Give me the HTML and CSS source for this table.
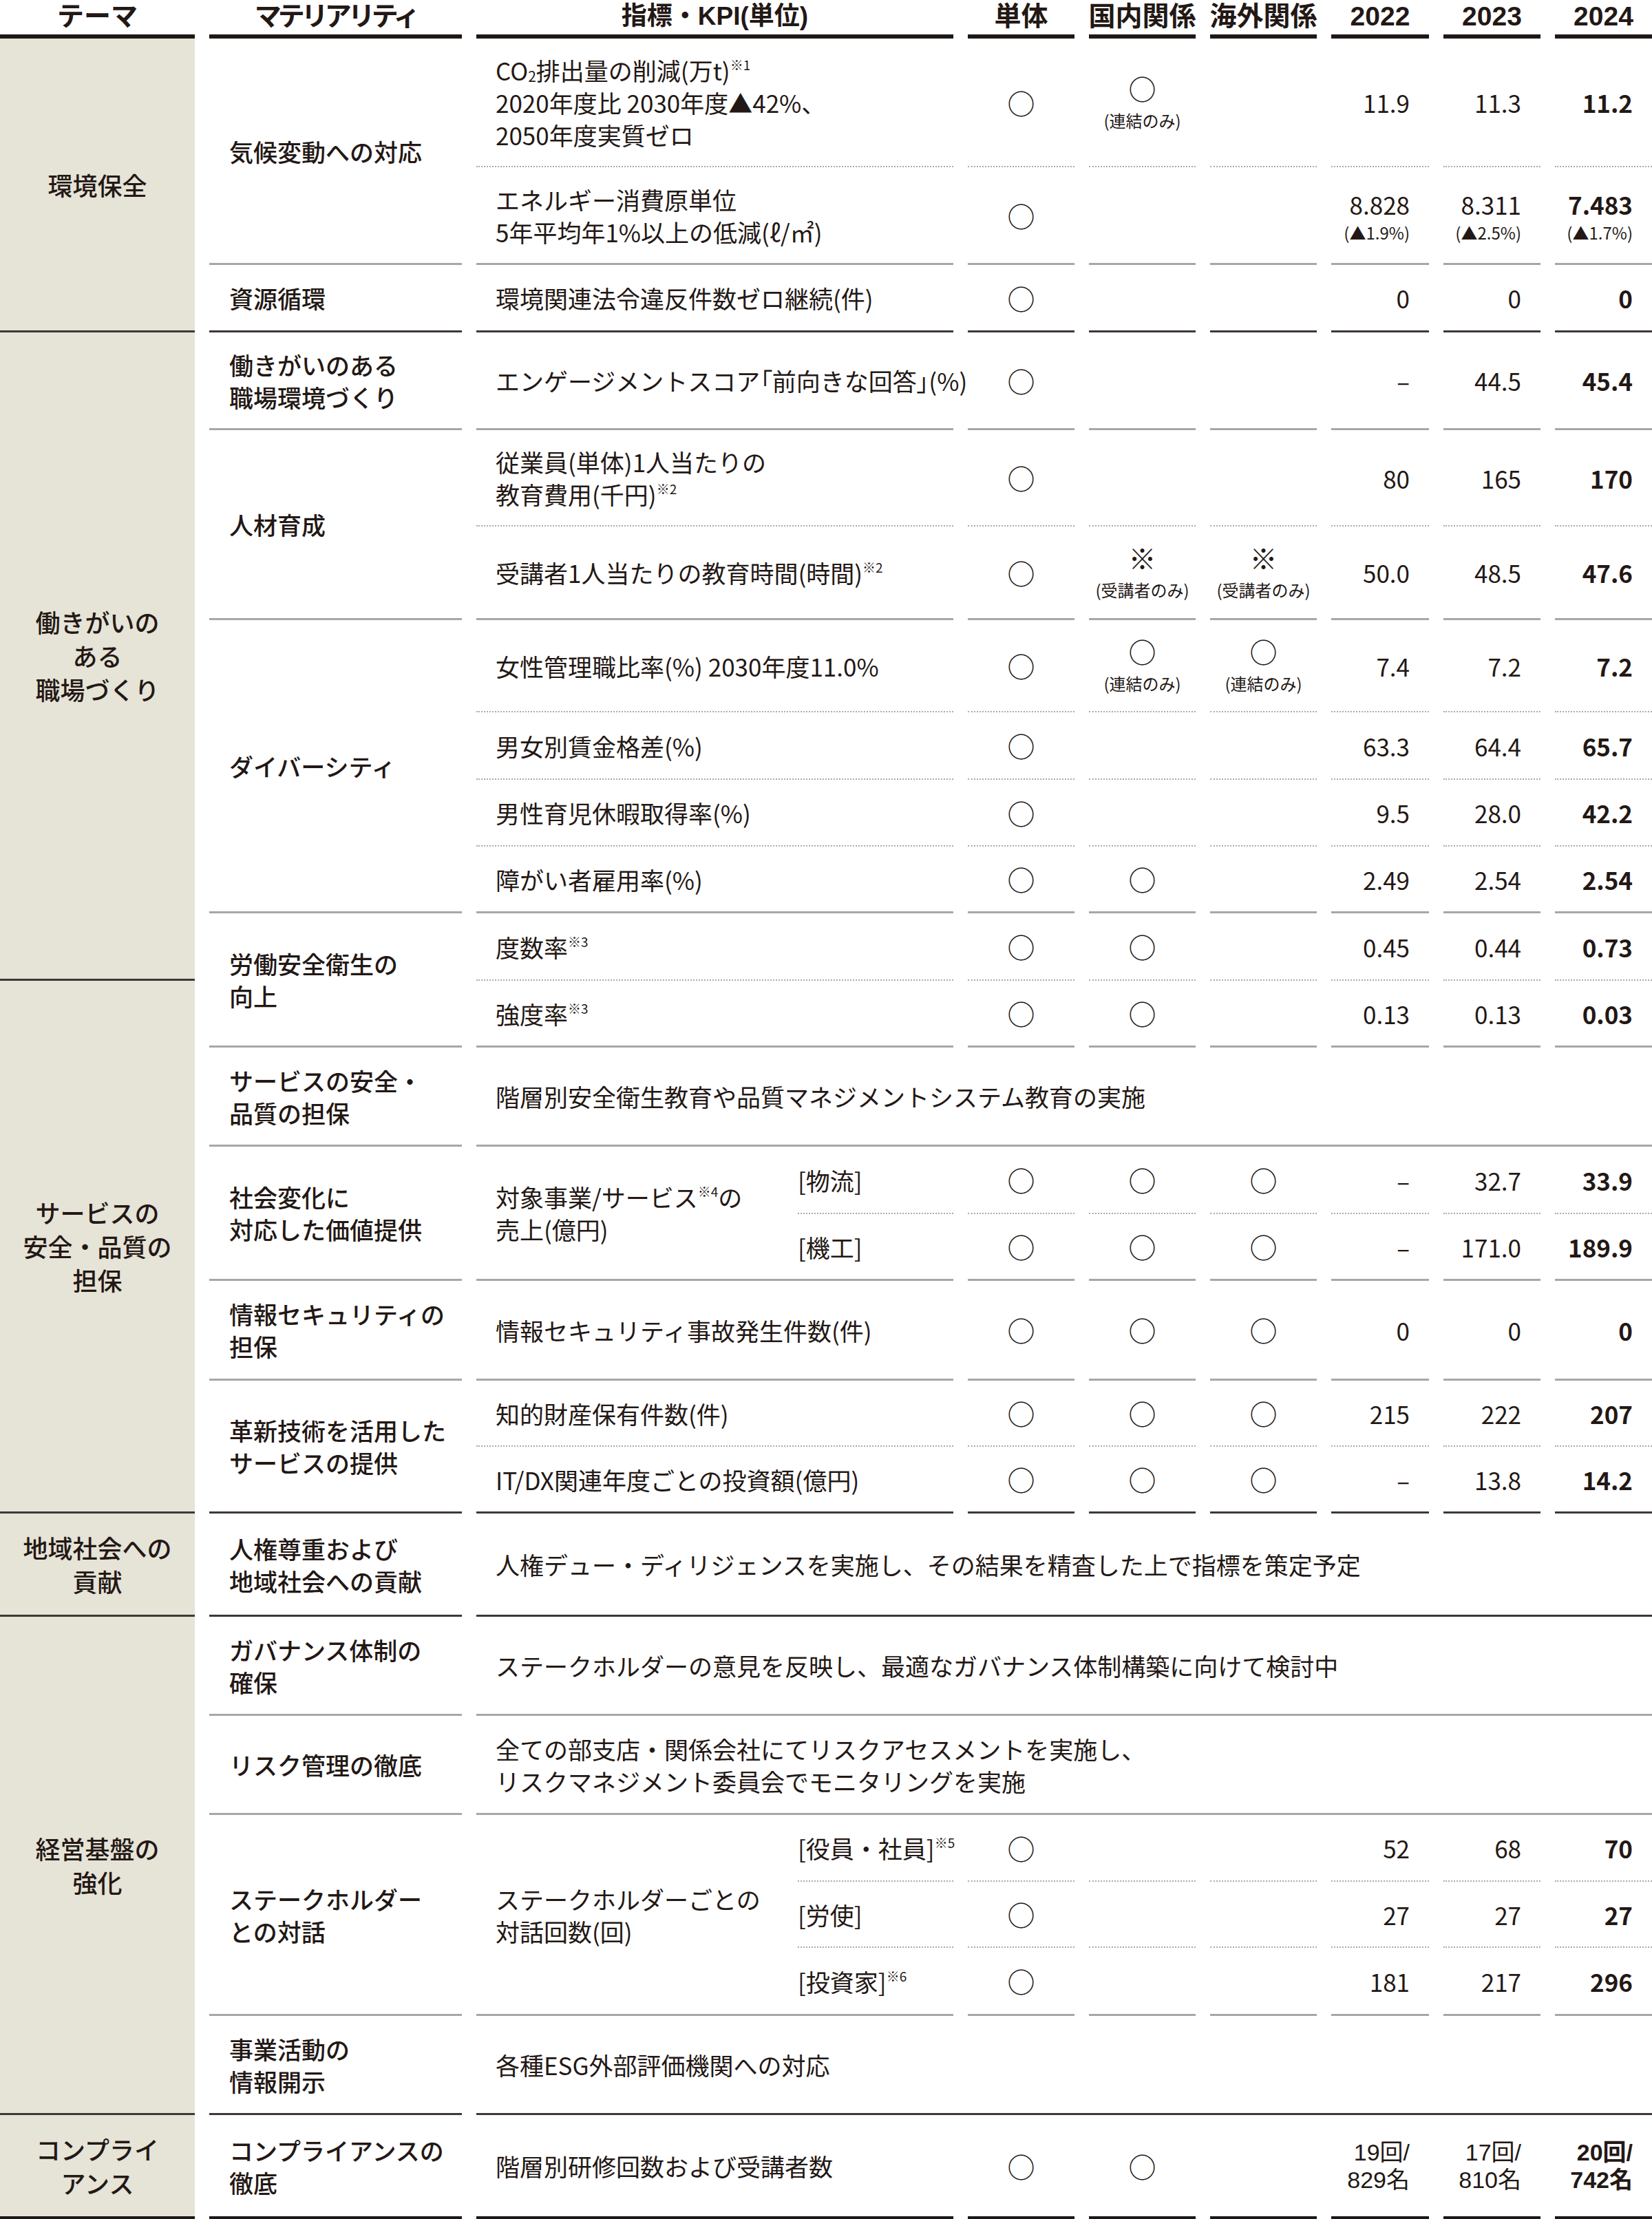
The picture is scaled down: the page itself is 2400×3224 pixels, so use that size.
FILE: index.html
```html
<!DOCTYPE html>
<html lang="ja">
<head>
<meta charset="utf-8">
<title>マテリアリティとKPI</title>
<link rel="stylesheet" href="styles.css">
</head>
<body>
<div class="cols head">
  <div class="h">テーマ</div>
  <div class="h hmat">マテリアリティ</div>
  <div class="h kpih">指標・KPI(単位)</div>
  <div class="h">単体</div>
  <div class="h">国内関係</div>
  <div class="h">海外関係</div>
  <div class="h">2022</div>
  <div class="h">2023</div>
  <div class="h">2024</div>
</div>

<div class="cols tbl">
  <!-- row 1 -->
  <div class="c th s3">環境保全</div>
  <div class="c mat r2">気候変動への対応</div>
  <div class="c kpi dot"><span>CO<span class="lo">2</span>排出量の削減(万t)<sup>※1</sup><br>2020年度比 2030年度▲42%、<br>2050年度実質ゼロ</span></div>
  <div class="c mk dot"><span class="o">○</span></div>
  <div class="c mk dot note-mk"><span class="o">○</span><span class="nt">(連結のみ)</span></div>
  <div class="c mk dot"></div>
  <div class="c num dot">11.9</div>
  <div class="c num dot">11.3</div>
  <div class="c num dot y24">11.2</div>
  <!-- row 2 -->
  <div class="c kpi"><span>エネルギー消費原単位<br>5年平均年1%以上の低減(ℓ/㎡)</span></div>
  <div class="c mk"><span class="o">○</span></div>
  <div class="c mk"></div>
  <div class="c mk"></div>
  <div class="c num"><span>8.828</span><span class="nt">(▲1.9%)</span></div>
  <div class="c num"><span>8.311</span><span class="nt">(▲2.5%)</span></div>
  <div class="c num y24"><span>7.483</span><span class="nt">(▲1.7%)</span></div>
  <!-- row 3 -->
  <div class="c mat dk">資源循環</div>
  <div class="c kpi dk">環境関連法令違反件数ゼロ継続(件)</div>
  <div class="c mk dk"><span class="o">○</span></div>
  <div class="c mk dk"></div>
  <div class="c mk dk"></div>
  <div class="c num dk">0</div>
  <div class="c num dk">0</div>
  <div class="c num dk y24">0</div>

  <!-- row 4 -->
  <div class="c th s8">働きがいの<br>ある<br>職場づくり</div>
  <div class="c mat">働きがいのある<br>職場環境づくり</div>
  <div class="c kpi">エンゲージメントスコア<span class="pb">「</span>前向きな回答<span class="pb">」</span>(%)</div>
  <div class="c mk"><span class="o">○</span></div>
  <div class="c mk"></div>
  <div class="c mk"></div>
  <div class="c num">–</div>
  <div class="c num">44.5</div>
  <div class="c num y24">45.4</div>
  <!-- row 5 -->
  <div class="c mat r2">人材育成</div>
  <div class="c kpi dot"><span>従業員(単体)1人当たりの<br>教育費用(千円)<sup>※2</sup></span></div>
  <div class="c mk dot"><span class="o">○</span></div>
  <div class="c mk dot"></div>
  <div class="c mk dot"></div>
  <div class="c num dot">80</div>
  <div class="c num dot">165</div>
  <div class="c num dot y24">170</div>
  <!-- row 6 -->
  <div class="c kpi"><span>受講者1人当たりの教育時間(時間)<sup>※2</sup></span></div>
  <div class="c mk"><span class="o">○</span></div>
  <div class="c mk note-mk"><span class="kome">※</span><span class="nt">(受講者のみ)</span></div>
  <div class="c mk note-mk"><span class="kome">※</span><span class="nt">(受講者のみ)</span></div>
  <div class="c num">50.0</div>
  <div class="c num">48.5</div>
  <div class="c num y24">47.6</div>
  <!-- row 7 -->
  <div class="c mat r4">ダイバーシティ</div>
  <div class="c kpi dot">女性管理職比率(%) 2030年度11.0%</div>
  <div class="c mk dot"><span class="o">○</span></div>
  <div class="c mk dot note-mk"><span class="o">○</span><span class="nt">(連結のみ)</span></div>
  <div class="c mk dot note-mk"><span class="o">○</span><span class="nt">(連結のみ)</span></div>
  <div class="c num dot">7.4</div>
  <div class="c num dot">7.2</div>
  <div class="c num dot y24">7.2</div>
  <!-- row 8 -->
  <div class="c kpi dot">男女別賃金格差(%)</div>
  <div class="c mk dot"><span class="o">○</span></div>
  <div class="c mk dot"></div>
  <div class="c mk dot"></div>
  <div class="c num dot">63.3</div>
  <div class="c num dot">64.4</div>
  <div class="c num dot y24">65.7</div>
  <!-- row 9 -->
  <div class="c kpi dot">男性育児休暇取得率(%)</div>
  <div class="c mk dot"><span class="o">○</span></div>
  <div class="c mk dot"></div>
  <div class="c mk dot"></div>
  <div class="c num dot">9.5</div>
  <div class="c num dot">28.0</div>
  <div class="c num dot y24">42.2</div>
  <!-- row 10 -->
  <div class="c kpi">障がい者雇用率(%)</div>
  <div class="c mk"><span class="o">○</span></div>
  <div class="c mk"><span class="o">○</span></div>
  <div class="c mk"></div>
  <div class="c num">2.49</div>
  <div class="c num">2.54</div>
  <div class="c num y24">2.54</div>
  <!-- row 11 -->
  <div class="c mat r2">労働安全衛生の<br>向上</div>
  <div class="c kpi dot"><span>度数率<sup>※3</sup></span></div>
  <div class="c mk dot"><span class="o">○</span></div>
  <div class="c mk dot"><span class="o">○</span></div>
  <div class="c mk dot"></div>
  <div class="c num dot">0.45</div>
  <div class="c num dot">0.44</div>
  <div class="c num dot y24">0.73</div>
  <!-- row 12 -->
  <div class="c th s7">サービスの<br>安全・品質の<br>担保</div>
  <div class="c kpi"><span>強度率<sup>※3</sup></span></div>
  <div class="c mk"><span class="o">○</span></div>
  <div class="c mk"><span class="o">○</span></div>
  <div class="c mk"></div>
  <div class="c num">0.13</div>
  <div class="c num">0.13</div>
  <div class="c num y24">0.03</div>
  <!-- row 13 -->
  <div class="c mat">サービスの安全・<br>品質の担保</div>
  <div class="c wide">階層別安全衛生教育や品質マネジメントシステム教育の実施</div>
  <!-- row 14 -->
  <div class="c mat r2">社会変化に<br>対応した価値提供</div>
  <div class="c kpim r2"><span>対象事業/サービス<sup>※4</sup>の<br>売上(億円)</span></div>
  <div class="c sub dot">[物流]</div>
  <div class="c mk dot"><span class="o">○</span></div>
  <div class="c mk dot"><span class="o">○</span></div>
  <div class="c mk dot"><span class="o">○</span></div>
  <div class="c num dot">–</div>
  <div class="c num dot">32.7</div>
  <div class="c num dot y24">33.9</div>
  <!-- row 15 -->
  <div class="c sub">[機工]</div>
  <div class="c mk"><span class="o">○</span></div>
  <div class="c mk"><span class="o">○</span></div>
  <div class="c mk"><span class="o">○</span></div>
  <div class="c num">–</div>
  <div class="c num">171.0</div>
  <div class="c num y24">189.9</div>
  <!-- row 16 -->
  <div class="c mat">情報セキュリティの<br>担保</div>
  <div class="c kpi">情報セキュリティ事故発生件数(件)</div>
  <div class="c mk"><span class="o">○</span></div>
  <div class="c mk"><span class="o">○</span></div>
  <div class="c mk"><span class="o">○</span></div>
  <div class="c num">0</div>
  <div class="c num">0</div>
  <div class="c num y24">0</div>
  <!-- row 17 -->
  <div class="c mat r2 dk">革新技術を活用した<br>サービスの提供</div>
  <div class="c kpi dot">知的財産保有件数(件)</div>
  <div class="c mk dot"><span class="o">○</span></div>
  <div class="c mk dot"><span class="o">○</span></div>
  <div class="c mk dot"><span class="o">○</span></div>
  <div class="c num dot">215</div>
  <div class="c num dot">222</div>
  <div class="c num dot y24">207</div>
  <!-- row 18 -->
  <div class="c kpi dk">IT/DX関連年度ごとの投資額(億円)</div>
  <div class="c mk dk"><span class="o">○</span></div>
  <div class="c mk dk"><span class="o">○</span></div>
  <div class="c mk dk"><span class="o">○</span></div>
  <div class="c num dk">–</div>
  <div class="c num dk">13.8</div>
  <div class="c num dk y24">14.2</div>

  <!-- row 19 -->
  <div class="c th">地域社会への<br>貢献</div>
  <div class="c mat dk">人権尊重および<br>地域社会への貢献</div>
  <div class="c wide dk">人権デュー・ディリジェンスを実施し、その結果を精査した上で指標を策定予定</div>

  <!-- row 20 -->
  <div class="c th s6">経営基盤の<br>強化</div>
  <div class="c mat">ガバナンス体制の<br>確保</div>
  <div class="c wide">ステークホルダーの意見を反映し、最適なガバナンス体制構築に向けて検討中</div>
  <!-- row 21 -->
  <div class="c mat">リスク管理の徹底</div>
  <div class="c wide">全ての部支店・関係会社にてリスクアセスメントを実施し、<br>リスクマネジメント委員会でモニタリングを実施</div>
  <!-- row 22 -->
  <div class="c mat r3">ステークホルダー<br>との対話</div>
  <div class="c kpim r3">ステークホルダーごとの<br>対話回数(回)</div>
  <div class="c sub dot"><span>[役員・社員]<sup>※5</sup></span></div>
  <div class="c mk dot"><span class="o">○</span></div>
  <div class="c mk dot"></div>
  <div class="c mk dot"></div>
  <div class="c num dot">52</div>
  <div class="c num dot">68</div>
  <div class="c num dot y24">70</div>
  <!-- row 23 -->
  <div class="c sub dot">[労使]</div>
  <div class="c mk dot"><span class="o">○</span></div>
  <div class="c mk dot"></div>
  <div class="c mk dot"></div>
  <div class="c num dot">27</div>
  <div class="c num dot">27</div>
  <div class="c num dot y24">27</div>
  <!-- row 24 -->
  <div class="c sub"><span>[投資家]<sup>※6</sup></span></div>
  <div class="c mk"><span class="o">○</span></div>
  <div class="c mk"></div>
  <div class="c mk"></div>
  <div class="c num">181</div>
  <div class="c num">217</div>
  <div class="c num y24">296</div>
  <!-- row 25 -->
  <div class="c mat dk">事業活動の<br>情報開示</div>
  <div class="c wide dk">各種ESG外部評価機関への対応</div>

  <!-- row 26 -->
  <div class="c th bk">コンプライ<br>アンス</div>
  <div class="c mat bk">コンプライアンスの<br>徹底</div>
  <div class="c kpi bk">階層別研修回数および受講者数</div>
  <div class="c mk bk"><span class="o">○</span></div>
  <div class="c mk bk"><span class="o">○</span></div>
  <div class="c mk bk"></div>
  <div class="c num two bk"><span>19回/</span><span>829名</span></div>
  <div class="c num two bk"><span>17回/</span><span>810名</span></div>
  <div class="c num two bk y24"><span>20回/</span><span>742名</span></div>
</div>
</body>
</html>
```

FILE: styles.css
```css
* {
  box-sizing: border-box;
  margin: 0;
  padding: 0;
}

html, body {
  background: #ffffff;
}

body {
  width: 2400px;
  margin: 0;
  font-family: "Noto Sans CJK JP", "Noto Sans", sans-serif;
  font-size: 35px;
  color: #231815;
  overflow: hidden;
}

.cols {
  display: grid;
  grid-template-columns: 283px 367px 446px 226px 155px 155px 155px 142px 141px 141px;
  column-gap: 21px;
}

/* header */
.head {
  height: 56px;
}

.h {
  display: flex;
  align-items: center;
  justify-content: center;
  border-bottom: 6px solid #1e1816;
  font-family: "Liberation Sans", "Noto Sans CJK JP", sans-serif;
  font-size: 39px;
  font-weight: 700;
  line-height: 1;
  padding-bottom: 4px;
  white-space: nowrap;
}

.hmat {
  letter-spacing: -5px;
}

.kpih {
  grid-column: span 2;
  font-size: 37px;
}

/* body */
.tbl {
  grid-template-rows: 187px 142px 98px 142px 140px 136px 134px 98px 97px 97px 98px 97px 144px 98px 97px 145px 96px 97px 150px 144px 144px 97px 96px 99px 144px 151px;
}

.c {
  display: flex;
  align-items: center;
  border-bottom: 3px solid #aaa6a5;
  line-height: 47px;
  min-width: 0;
}

.c.dot {
  border-bottom: 2px dotted #aeaaa9;
}

.c.dk {
  border-bottom: 3px solid #3f3836;
}

.c.bk {
  border-bottom: 4px solid #1e1816;
}

.th {
  grid-column: 1;
  justify-content: center;
  text-align: center;
  background: #e6e3d7;
  border-bottom: 3px solid #3f3836;
  font-size: 36px;
  font-weight: 500;
  line-height: 49px;
}

.th.bk {
  border-bottom: 4px solid #1e1816;
}

.s3 { grid-row: span 3; }
.s6 { grid-row: span 6; }
.s7 { grid-row: span 7; }
.s8 { grid-row: span 8; }

.r2 { grid-row: span 2; }
.r3 { grid-row: span 3; }
.r4 { grid-row: span 4; }

.mat {
  grid-column: 2;
  padding-left: 29px;
  font-weight: 500;
  white-space: nowrap;
}

.kpi {
  grid-column: 3 / span 2;
  padding-left: 28px;
  white-space: nowrap;
}

.kpim {
  grid-column: 3;
  margin-right: -21px;
  padding-left: 28px;
  white-space: nowrap;
}

.sub {
  grid-column: 4;
  white-space: nowrap;
}

.wide {
  grid-column: 3 / span 8;
  padding-left: 28px;
}

.pb {
  font-feature-settings: "palt";
}

.mk {
  flex-direction: column;
  justify-content: center;
  align-items: center;
}

.o {
  font-size: 40px;
  line-height: 38px;
  font-weight: 400;
}

.kome {
  font-size: 40px;
  line-height: 36px;
  font-weight: 500;
}

.nt {
  display: block;
  font-size: 24px;
  line-height: 28px;
  font-weight: 400;
  white-space: nowrap;
}

.note-mk .nt {
  margin-top: 14px;
}

.note-mk .kome + .nt {
  margin-top: 15px;
}

.num {
  flex-direction: column;
  justify-content: center;
  align-items: flex-end;
  padding-right: 28px;
  font-size: 35px;
}

.num .nt {
  margin-top: 4px;
}

.num.two {
  font-family: "Liberation Sans", "Noto Sans CJK JP", sans-serif;
  font-size: 34px;
  line-height: 40px;
}

.y24 {
  font-weight: 600;
}

sup {
  font-size: 19px;
  line-height: 0;
  vertical-align: 15px;
}

.lo {
  font-size: 21px;
  line-height: 0;
  vertical-align: -2px;
}
```
